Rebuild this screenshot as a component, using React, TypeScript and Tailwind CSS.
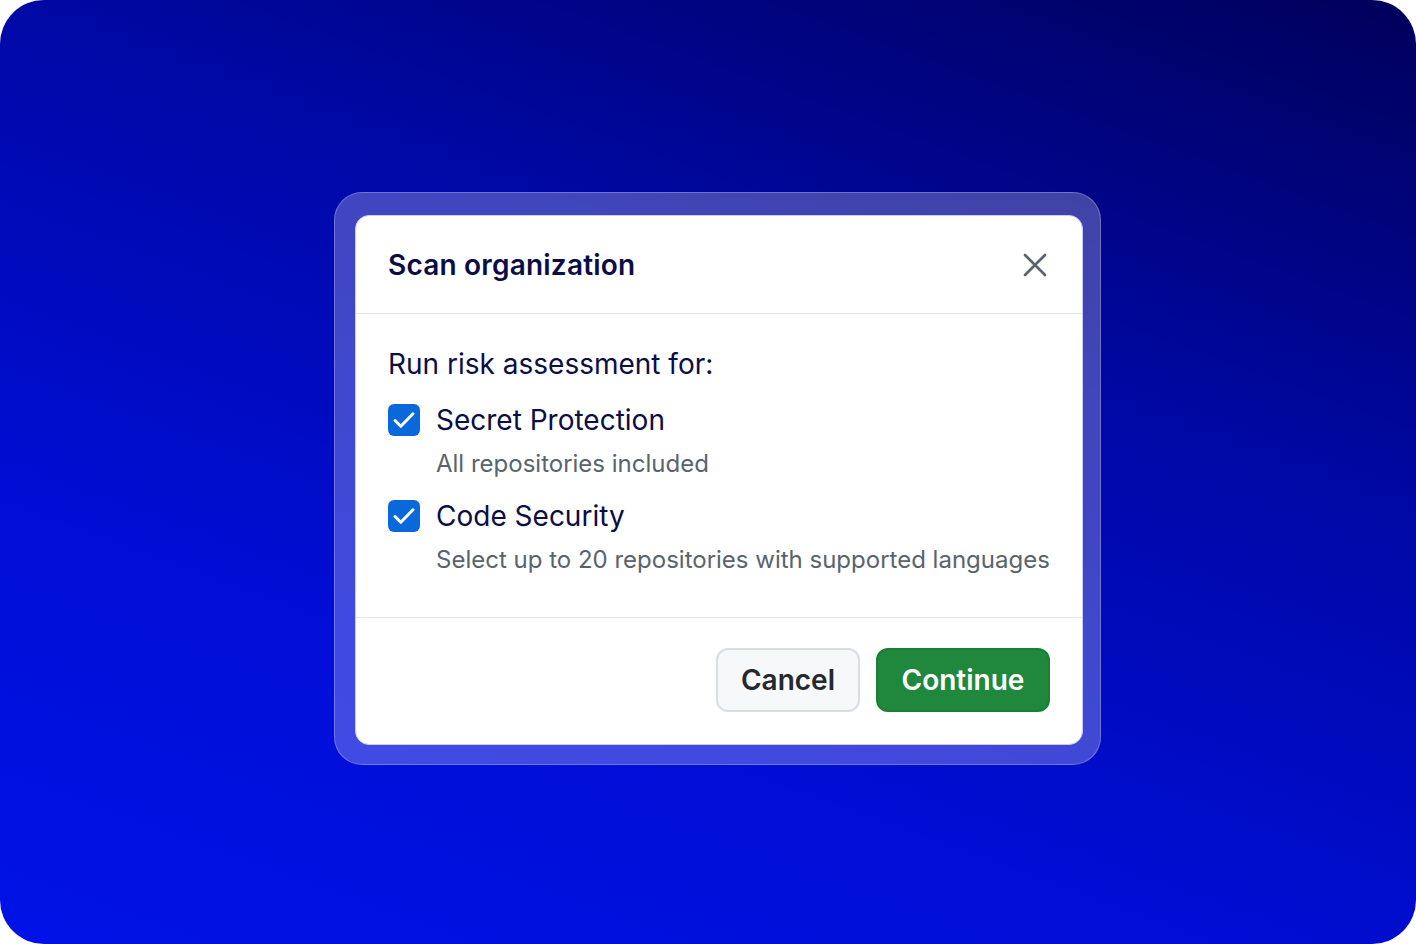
import React from "react";

const font = { fontFamily: "Inter, 'Noto Sans', sans-serif" };

const CheckBox = () => (
  <span className="flex h-8 w-8 shrink-0 items-center justify-center rounded-[6px] bg-[#0969da]">
    <svg width="32" height="32" viewBox="0 0 32 32" fill="none">
      <path d="M7 16.5l5.8 5.8L25 9.8" stroke="white" strokeWidth="3" strokeLinecap="round" strokeLinejoin="round" />
    </svg>
  </span>
);

const Option = ({ label, hint, first }: { label: string; hint: string; first?: boolean }) => (
  <div className={first ? "mt-[18px]" : "mt-4"}>
    <div className="flex h-10 items-center gap-4">
      <CheckBox />
      <span className="text-[28px] leading-10 text-[#0b0d45]">{label}</span>
    </div>
    <div className="mt-2 pl-12 text-[24px] leading-8 text-[#59636e]">{hint}</div>
  </div>
);

export default function App() {
  return (
    <div className="h-[944px] w-[1416px] bg-white" style={font}>
      <div className="relative h-[944px] w-[1416px] overflow-hidden rounded-[44px] bg-[linear-gradient(200deg,#00005a_0%,#0008a4_35%,#000ed6_70%,#0012e6_100%)] pl-[334px] pt-[192px]">
        <div className="relative w-[767px] rounded-[28px] border border-white/25 bg-white/25 pb-[19px] pl-[20px] pr-[17px] pt-[22px]">
          <div className="w-[728px] overflow-hidden rounded-[14px] border border-[#c9cbf2] bg-white">
            <div className="flex h-[98px] items-center justify-between border-b border-[#e4e6ee] pl-[32px] pr-[35px]">
              <h2 className="text-[28px] font-semibold tracking-[0.2px] text-[#0b0d45]">Scan organization</h2>
              <svg width="24" height="24" viewBox="0 0 24 24" fill="none">
                <path d="M2 2l20 20M22 2L2 22" stroke="#59636e" strokeWidth="2.6" strokeLinecap="round" />
              </svg>
            </div>
            <div className="border-b border-[#e4e6ee] pb-[41px] pl-[32px] pt-[32px]">
              <p className="text-[28px] leading-9 text-[#0b0d45]">Run risk assessment for:</p>
              <Option first label="Secret Protection" hint="All repositories included" />
              <Option label="Code Security" hint="Select up to 20 repositories with supported languages" />
            </div>
            <div className="flex justify-end gap-4 pb-[32px] pr-[32px] pt-[30px]">
              <button className="h-16 w-[144px] rounded-[12px] border-2 border-[#d8dde3] bg-[#f6f8fa] text-[28px] font-semibold text-[#25292e]">
                Cancel
              </button>
              <button className="h-16 w-[174px] rounded-[12px] border-2 border-[#1a7f37] bg-[#1f883d] text-[28px] font-semibold text-white">
                Continue
              </button>
            </div>
          </div>
        </div>
      </div>
    </div>
  );
}
